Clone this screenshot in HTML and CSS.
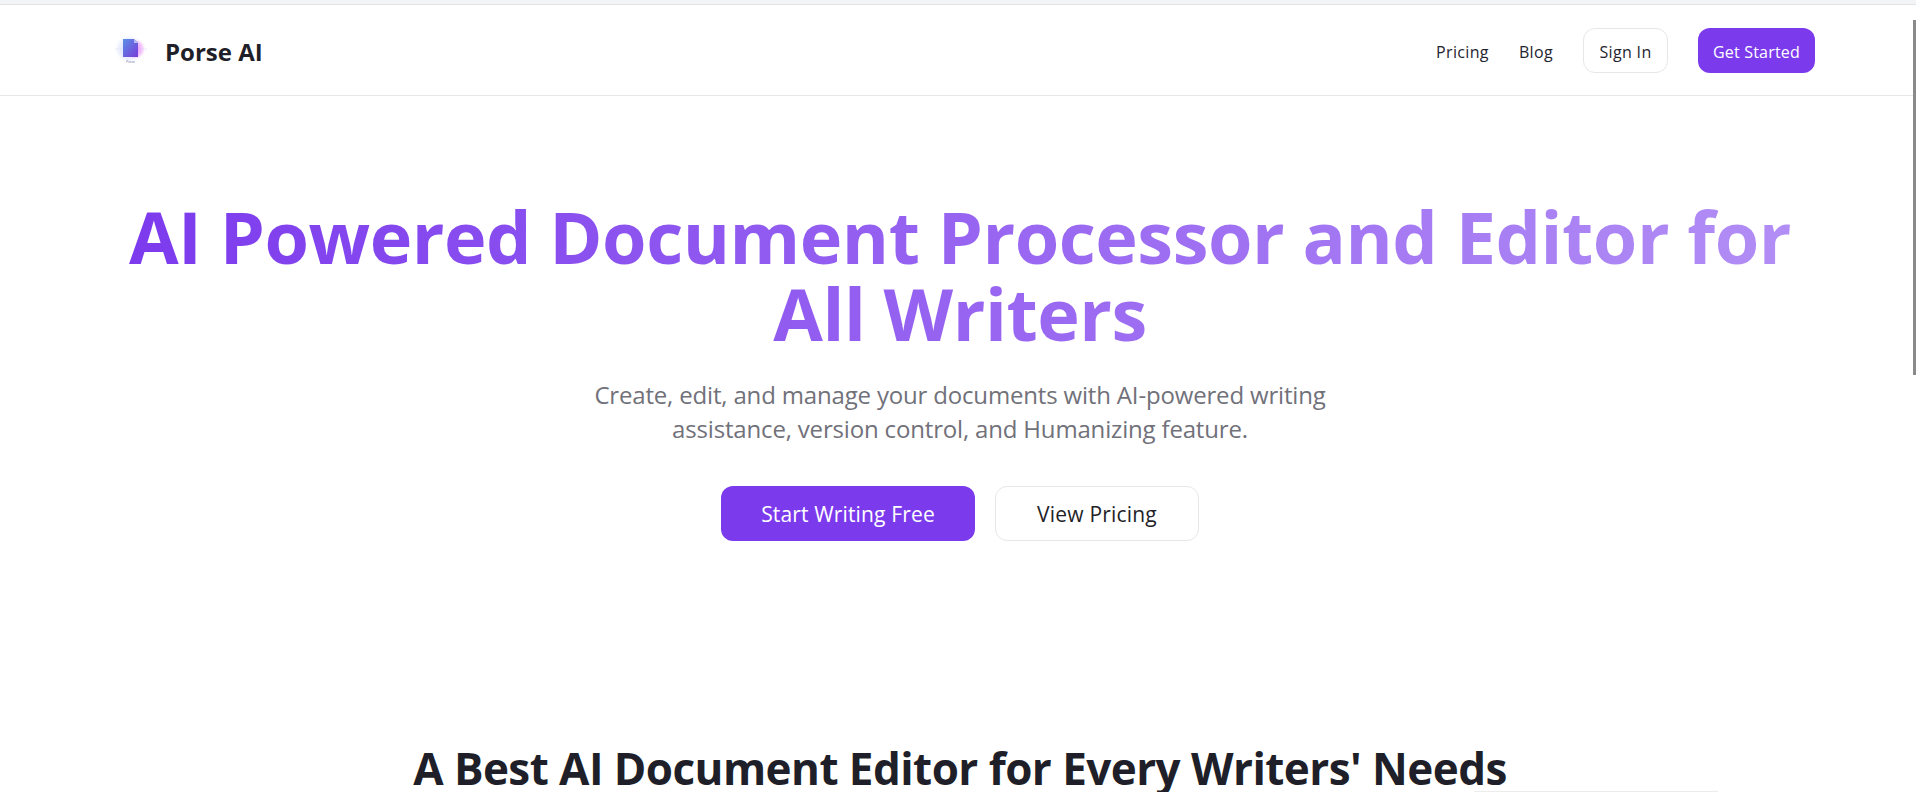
FILE: index.html
```html
<!DOCTYPE html>
<html lang="en">
<head>
<meta charset="utf-8">
<title>Porse AI</title>
<link rel="stylesheet" href="styles.css">
</head>
<body>
<div class="topstrip"></div>
<div class="scrollbar"></div>
<header class="nav">
  <div class="brand">
    <svg class="logo" viewBox="0 0 40 40" aria-hidden="true">
      <defs>
        <radialGradient id="glow-blue" cx="50%" cy="50%" r="50%">
          <stop offset="0" stop-color="#a5b4fc" stop-opacity=".6"/>
          <stop offset=".7" stop-color="#c7d2fe" stop-opacity=".3"/>
          <stop offset="1" stop-color="#ffffff" stop-opacity="0"/>
        </radialGradient>
        <radialGradient id="glow-pink" cx="50%" cy="50%" r="50%">
          <stop offset="0" stop-color="#e879f9" stop-opacity=".9"/>
          <stop offset=".65" stop-color="#f0abfc" stop-opacity=".6"/>
          <stop offset="1" stop-color="#ffffff" stop-opacity="0"/>
        </radialGradient>
        <linearGradient id="doc" x1="0" y1="0" x2="1" y2="1">
          <stop offset="0" stop-color="#5a90e6"/>
          <stop offset="1" stop-color="#7a3bd8"/>
        </linearGradient>
      </defs>
      <circle cx="17" cy="19" r="15" fill="url(#glow-blue)"/>
      <circle cx="23" cy="19" r="11.5" fill="url(#glow-pink)"/>
      <path d="M3 19h6M28 19h7" stroke="#cfd1ea" stroke-width=".6" stroke-dasharray="1.5 1"/>
      <path d="M11 9h11l4 4v14H11z" fill="url(#doc)"/>
      <path d="M22 9v4h4z" fill="#b4bdf3"/>
      <text class="logo-caption" x="18.5" y="33" text-anchor="middle">Porse</text>
    </svg>
    <span class="brand-name">Porse AI</span>
  </div>
  <nav class="links">
    <a class="link">Pricing</a>
    <a class="link">Blog</a>
    <a class="btn btn-outline">Sign In</a>
    <a class="btn btn-primary">Get Started</a>
  </nav>
</header>
<main class="page">
  <section class="hero">
    <h1 class="title">AI Powered Document Processor and Editor for All Writers</h1>
    <p class="lead">Create, edit, and manage your documents with AI-powered writing assistance, version control, and Humanizing feature.</p>
    <div class="actions">
      <a class="cta cta-primary">Start Writing Free</a>
      <a class="cta cta-outline">View Pricing</a>
    </div>
  </section>
  <section class="features">
    <h2 class="subtitle">A Best AI Document Editor for Every Writers' Needs</h2>
    <div class="card-edge"></div>
  </section>
</main>
</body>
</html>
```

FILE: styles.css
```css
* { box-sizing: border-box; }
html, body { margin: 0; padding: 0; height: 100%; overflow: hidden; background: #fff; }
body { font-family: "Open Sans", "Noto Sans", sans-serif; color: #1f1f29; }
.topstrip { height: 5px; background: #f3f4f6; border-bottom: 1px solid #e2e3e6; }
.scrollbar { position: absolute; top: 20px; right: 0; width: 3px; height: 355px; background: #8a8a8a; }
.nav { height: 91px; border-bottom: 1px solid #e5e7eb; padding: 0 101px 0 112px; display: flex; align-items: center; justify-content: space-between; }
.brand { display: flex; align-items: center; gap: 13px; }
.logo { width: 40px; height: 40px; }
.logo-caption { font-size: 3.2px; fill: #6b6a94; font-family: "Open Sans", sans-serif; }
.brand-name { font-size: 24px; font-weight: 700; letter-spacing: 0; color: #1f1f29; padding-top: 2px; }
.links { display: flex; align-items: center; font-size: 16px; }
.link { color: #1f2430; margin-right: 30px; letter-spacing: .35px; padding-top: 3px; }
.btn { display: flex; align-items: center; justify-content: center; height: 45px; border-radius: 12px; letter-spacing: .35px; padding-top: 3px; }
.btn-outline { width: 85px; border: 1px solid #e5e7eb; margin-right: 30px; color: #1f2430; }
.btn-primary { width: 117px; background: #7c3aed; color: #fff; letter-spacing: .2px; }
.page { padding-left: 4px; }
.hero { display: flex; flex-direction: column; align-items: center; padding-top: 102px; text-align: center; }
.title { margin: 0; width: 1680px; font-size: 72px; line-height: 77px; font-weight: 700; letter-spacing: -.48px; background: linear-gradient(90deg, #7c3aed, #b28ef5); -webkit-background-clip: text; background-clip: text; color: transparent; }
.lead { margin: 26px 0 0; width: 760px; font-size: 24px; line-height: 34px; color: #71717a; letter-spacing: -.17px; }
.actions { display: flex; gap: 20px; margin-top: 40px; }
.cta { display: flex; align-items: center; justify-content: center; height: 55px; border-radius: 12px; font-size: 21px; padding-top: 1px; }
.cta-primary { width: 254px; background: #7c3aed; color: #fff; letter-spacing: .15px; }
.cta-outline { width: 204px; border: 1px solid #e5e7eb; color: #1f1f29; letter-spacing: .2px; }
.features { display: flex; flex-direction: column; align-items: center; margin-top: 204px; }
.subtitle { margin: 0; font-size: 44px; line-height: 46px; font-weight: 700; letter-spacing: -.55px; color: #1f1f29; }
.card-edge { align-self: flex-start; margin-left: 1470px; width: 244px; height: 1px; background: #ececec; }
```
